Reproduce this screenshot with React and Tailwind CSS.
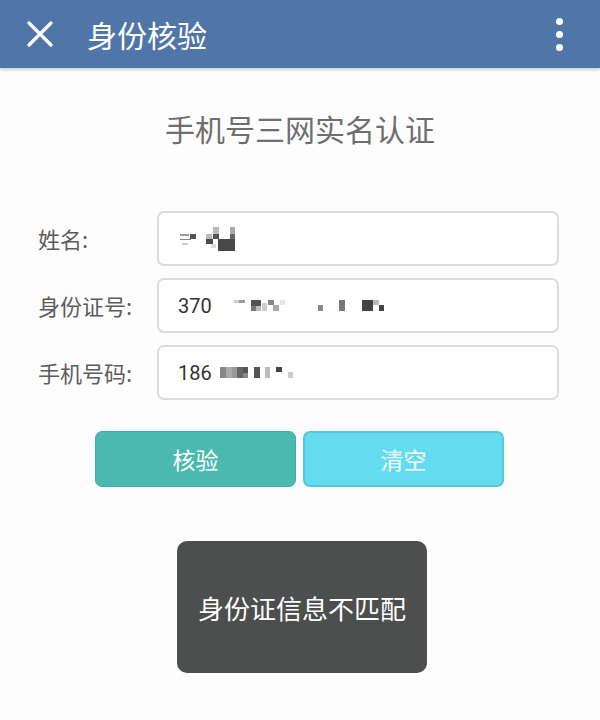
import React from 'react';

// pixelated (mosaic) bits that hide the personal data
const nameBlocks = [
    [2, 8, 9, 2, '#9a9a9a'], [2, 13, 11, 1, '#888'], [4, 17, 6, 2, '#ccc'],
    [12, 8, 6, 5, '#555'], [28, 8, 6, 5, '#bbb'], [28, 13, 7, 5, '#4a4a4a'],
    [35, 1, 6, 7, '#bbb'], [35, 8, 6, 5, '#555'], [33, 18, 5, 4, '#ddd'],
    [40, 13, 17, 12, '#484848'], [52, 1, 5, 7, '#aaa'], [52, 8, 5, 5, '#666'],
];

const idBlocks = [
    [0, 0, 5, 3, '#ccc'], [5, 0, 6, 3, '#999'], [17, 0, 10, 6, '#555'],
    [17, 6, 5, 5, '#777'], [22, 6, 5, 5, '#bbb'], [28, 3, 5, 8, '#ccc'],
    [34, 0, 6, 5, '#888'], [39, 5, 6, 6, '#aaa'], [46, 0, 5, 5, '#e6e6e6'],
    [84, 5, 5, 6, '#888'], [105, 0, 6, 11, '#777'], [128, 0, 11, 11, '#444'],
    [139, 0, 6, 5, '#bbb'], [145, 5, 5, 6, '#444'],
];

const phoneBlocks = [
    [0, 0, 6, 11, '#888'], [6, 0, 6, 11, '#aaa'], [12, 0, 5, 11, '#999'],
    [17, 0, 6, 11, '#666'], [23, 0, 5, 6, '#555'], [23, 6, 5, 5, '#888'],
    [34, 0, 6, 11, '#555'], [45, 0, 5, 11, '#bbb'], [56, 0, 6, 5, '#444'],
    [68, 5, 5, 6, '#ccc'],
];

function Mosaic({ blocks, width, height }) {
    return (
        <svg width={width} height={height} viewBox={`0 0 ${width} ${height}`} className="block">
            {blocks.map(([x, y, w, h, c], i) => (
                <rect key={i} x={x} y={y} width={w} height={h} fill={c} />
            ))}
        </svg>
    );
}

function Field({ label, children }) {
    return (
        <div className="flex items-center h-[55px]">
            <div className="w-[157px] shrink-0 whitespace-nowrap pl-[38px] text-[22px] text-[#5c5c5c]">{label}</div>
            <div className="w-[402px] shrink-0 h-full flex items-center pl-[19px] border-2 border-[#dcdcdc] rounded-[7px] bg-white text-[20px] text-[#333333] font-['Roboto','Noto_Sans_CJK_SC',sans-serif]">
                {children}
            </div>
        </div>
    );
}

export default function App() {
    return (
        <div className="w-[600px] h-[720px] bg-[#fdfdfd] font-['Noto_Sans_CJK_SC','Noto_Sans',sans-serif]">
            {/* Top bar */}
            <header className="flex items-center h-[68px] bg-[#5076a8] shadow-[0_2px_3px_rgba(0,0,0,0.18)] relative">
                <svg width="26" height="26" viewBox="0 0 26 26" className="ml-[27px]">
                    <path d="M2 2 L24 24 M24 2 L2 24" stroke="#fff" strokeWidth="3.2" strokeLinecap="round" />
                </svg>
                <h1 className="ml-[34px] text-[30px] text-white leading-none">身份核验</h1>
                <div className="ml-auto mr-[37px] flex flex-col gap-[6px]">
                    <span className="w-[7px] h-[7px] rounded-full bg-white" />
                    <span className="w-[7px] h-[7px] rounded-full bg-white" />
                    <span className="w-[7px] h-[7px] rounded-full bg-white" />
                </div>
            </header>

            <h2 className="mt-[40px] h-[40px] leading-[40px] text-center text-[30px] text-[#6e6e6e]">手机号三网实名认证</h2>

            {/* Form */}
            <div className="mt-[63px] flex flex-col gap-[12px]">
                <Field label="姓名:">
                    <Mosaic blocks={nameBlocks} width={60} height={26} />
                </Field>
                <Field label="身份证号:">
                    <span>370</span>
                    <span className="ml-[22px]"><Mosaic blocks={idBlocks} width={152} height={11} /></span>
                </Field>
                <Field label="手机号码:">
                    <span>186</span>
                    <span className="ml-[8px]"><Mosaic blocks={phoneBlocks} width={74} height={11} /></span>
                </Field>
            </div>

            {/* Buttons */}
            <div className="mt-[31px] flex gap-[7px] pl-[95px]">
                <button className="w-[201px] h-[56px] rounded-[7px] bg-[#4cb9b1] border border-[#45aba4] text-white text-[23px]">核验</button>
                <button className="w-[201px] h-[56px] rounded-[7px] bg-[#63dcef] border-2 border-[#55c8d6] text-white text-[23px]">清空</button>
            </div>

            {/* Toast */}
            <div className="mt-[54px] ml-[177px] w-[250px] h-[132px] rounded-[10px] bg-[#4d4e4e] flex items-center justify-center text-white text-[26px]">
                身份证信息不匹配
            </div>
        </div>
    );
}
